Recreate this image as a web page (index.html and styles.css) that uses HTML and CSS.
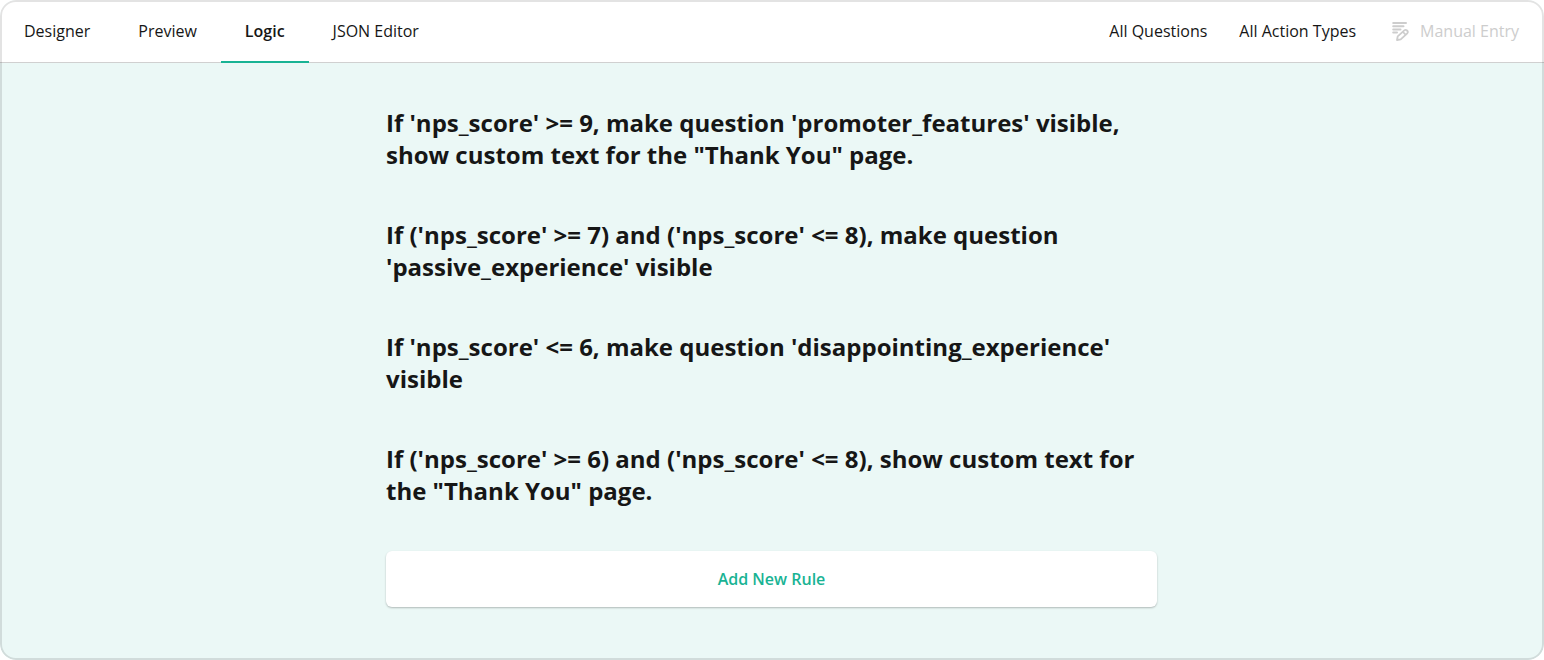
FILE: index.html
```html
<!DOCTYPE html>
<html lang="en">
<head>
<meta charset="utf-8">
<title>Survey Logic</title>
<link rel="stylesheet" href="styles.css">
</head>
<body>
<div class="creator">
  <header class="top-bar">
    <nav class="tabs">
      <button class="tab" type="button">Designer</button>
      <button class="tab" type="button">Preview</button>
      <button class="tab tab-active" type="button" aria-current="page">Logic</button>
      <button class="tab" type="button">JSON Editor</button>
    </nav>
    <div class="toolbar">
      <button class="tool" type="button">All Questions</button>
      <button class="tool" type="button">All Action Types</button>
      <button class="tool tool-entry" type="button" disabled>
        <svg class="icon" viewBox="0 0 24 24" fill="none" stroke="currentColor" aria-hidden="true">
          <path stroke-width="2" stroke-linecap="round" d="M5.200 4h12.800M5.200 7.200h10.300M5.200 10.400h7.300M5.200 13.500h3.800"/>
          <path stroke-width="1.800" stroke-linejoin="round" d="M9 21l.7-3.600 6.600-6c1.700-1.500 4.600.9 3 2.900l-6.600 6zM15 13l2.500 2.600"/>
        </svg>
        Manual Entry
      </button>
    </div>
  </header>
  <main class="logic">
    <div class="rules">
      <h2 class="rule">If 'nps_score' &gt;= 9, make question 'promoter_features' visible, show custom text for the "Thank You" page.</h2>
      <h2 class="rule">If ('nps_score' &gt;= 7) and ('nps_score' &lt;= 8), make question 'passive_experience' visible</h2>
      <h2 class="rule">If 'nps_score' &lt;= 6, make question 'disappointing_experience' visible</h2>
      <h2 class="rule">If ('nps_score' &gt;= 6) and ('nps_score' &lt;= 8), show custom text for the "Thank You" page.</h2>
      <button class="add-rule" type="button">Add New Rule</button>
    </div>
  </main>
</div>
</body>
</html>
```
FILE: styles.css
```css
* { box-sizing: border-box; }
body {
  margin: 0;
  background: #fff;
  color: #161616;
  font-family: "Open Sans", sans-serif;
}
button {
  border: 0;
  background: none;
  color: inherit;
  font: inherit;
  cursor: pointer;
}
.creator {
  position: relative;
  display: flex;
  flex-direction: column;
  min-height: 100vh;
  overflow: hidden;
  border-radius: 16px;
  background: #ebf8f6;
}
/* translucent frame drawn over the header and the canvas */
.creator::after {
  content: "";
  position: absolute;
  inset: 0;
  border: 2px solid rgba(0, 0, 0, 0.11);
  border-radius: 16px;
  pointer-events: none;
}
.top-bar {
  display: flex;
  justify-content: space-between;
  border-bottom: 1px solid #d0d0d0;
  background: #fff;
}
.tabs { display: flex; }
.tab {
  margin-bottom: -1px;
  padding: 19px 24px 18px;
  border-bottom: 2px solid transparent;
  font-size: 16px;
  line-height: 24px;
}
.tab-active {
  border-color: #19b394;
  font-weight: 600;
}
.toolbar {
  display: flex;
  align-items: center;
  gap: 32px;
  padding-right: 25px;
}
.tool {
  padding: 0;
  font-size: 16px;
  line-height: 24px;
}
.tool-entry {
  display: flex;
  align-items: center;
  gap: 8px;
  color: #cdcdcd;
}
.icon { width: 24px; height: 24px; }
.logic {
  display: flex;
  flex: 1;
  justify-content: center;
  padding: 44px 25px 44px 24px;
}
.rules {
  width: 100%;
  max-width: 771px;
}
.rule {
  margin: 0 0 48px;
  font-size: 24px;
  font-weight: 700;
  line-height: 32px;
}
.add-rule {
  display: block;
  width: 100%;
  margin-top: -4px;
  padding: 16px;
  border-radius: 6px;
  background: #fff;
  box-shadow: 0 1px 2px rgba(0, 0, 0, 0.25);
  color: #19b394;
  font-size: 16px;
  font-weight: 600;
  line-height: 24px;
}
```
